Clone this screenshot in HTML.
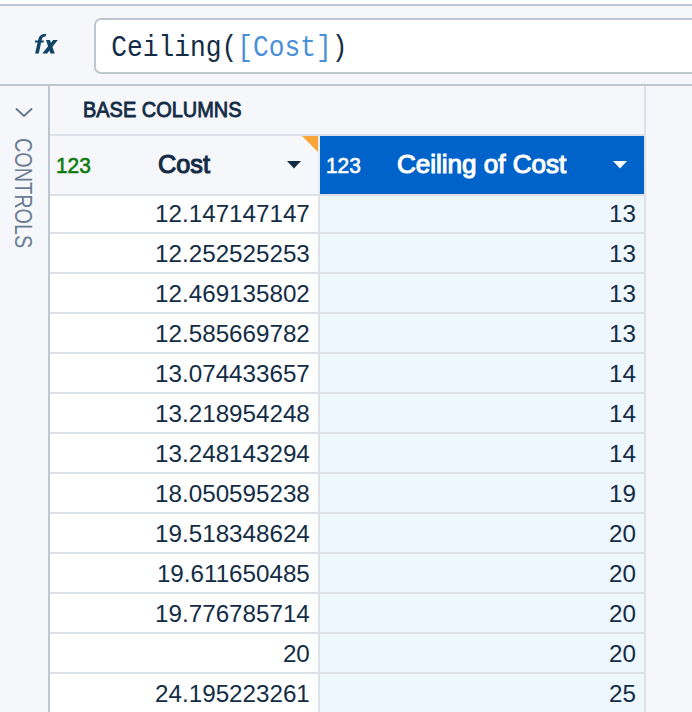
<!DOCTYPE html>
<html><head><meta charset="utf-8">
<style>
*{margin:0;padding:0;box-sizing:border-box}
html,body{width:692px;height:712px;overflow:hidden;background:#f5f7fa;font-family:"Liberation Sans",sans-serif;color:#132c45}
.a{position:absolute}
#topw{left:0;top:0;width:692px;height:4px;background:#fff}
#topl{left:0;top:4px;width:692px;height:2px;background:#bec6d0}
#input{left:94px;top:18px;width:620px;height:56px;background:#fff;border:2px solid #bec6d0;border-radius:7px}
#formula{left:111.3px;top:29.9px;font-family:"Liberation Mono",monospace;font-size:26.25px;line-height:34px;white-space:pre;color:#132c45;transform-origin:0 0;transform:scaleY(1.09)}
#formula span{color:#4a90d9}
#sep{left:0;top:84px;width:692px;height:2px;background:#bec6d0}
#vl{left:48px;top:86px;width:2px;height:626px;background:#bec6d0}
#rl{left:644px;top:86px;width:2px;height:626px;background:#dde2e8}
#bc{left:83px;top:94px;font-size:22.8px;font-weight:normal;-webkit-text-stroke:0.9px currentColor;line-height:30px;white-space:nowrap;transform-origin:0 0;transform:scaleX(0.875)}
#hl{left:50px;top:134px;width:594px;height:2px;background:#dde2e8}
#ceilh{left:320px;top:136px;width:324px;height:58px;background:#0063c9}
#hl2{left:50px;top:194px;width:594px;height:2px;background:#dde2e8}
.g123{-webkit-text-stroke:0.6px currentColor;transform-origin:0 0;transform:scaleX(0.95);font-size:22px;font-weight:normal;line-height:30px;white-space:nowrap;top:151px}
.hd{font-size:25.6px;font-weight:normal;-webkit-text-stroke:1.1px currentColor;line-height:30px;white-space:nowrap;transform-origin:0 0;transform:scaleX(0.986);top:149.2px}
#orange{left:302px;top:136px;width:0;height:0;border-top:16px solid #f9a43a;border-left:16px solid transparent}
#col1{left:50px;top:196px;width:268px;height:516px;background:#fff}
#col2{left:320px;top:196px;width:324px;height:516px;background:#eef6fe}
#vmid{left:318px;top:196px;width:2px;height:516px;background:#dde2e8}
#vmidh{left:318px;top:136px;width:2px;height:58px;background:#e6ebf2}
.rowl{position:absolute;left:50px;width:594px;height:2px;background:#dde2e8}
.num{position:absolute;font-size:24.2px;line-height:30px;white-space:nowrap;text-align:right}
#ctl{left:34.6px;top:137.5px;transform-origin:0 0;transform:rotate(90deg) scaleX(0.81);font-size:24.5px;line-height:24.5px;color:#6a7d92;white-space:nowrap}
</style></head>
<body>
<div class="a" id="topw"></div>
<div class="a" id="topl"></div>
<svg class="a" style="left:30px;top:30px" width="32" height="28" viewBox="0 0 32 28"><g fill="#0f4466"><path d="M5.1 23.6 H8.8 L11.6 10.2 C12.2 7.6 13.3 6.5 15.6 6.6 L16.3 4.2 C11.6 3.6 9.2 5.8 8.3 9.6 Z"/><path d="M5.2 10.5 H13.9 L13.6 12.6 H4.9 Z"/><path d="M16 10 H19.9 L24.8 23.6 H20.4 Z"/><path d="M23.1 10 H27.8 L17.1 23.6 H12.3 Z"/></g></svg>
<div class="a" id="input"></div>
<div class="a" id="formula">Ceiling(<span>[Cost]</span>)</div>
<div class="a" id="sep"></div>
<div class="a" id="vl"></div>
<svg class="a" style="left:15px;top:106.5px" width="18" height="12" viewBox="0 0 18 12"><path d="M1.5 2 L9 9 L16.5 2" fill="none" stroke="#63778d" stroke-width="1.8" stroke-linecap="round" stroke-linejoin="round"/></svg>
<div class="a" id="ctl">CONTROLS</div>
<div class="a" id="bc">BASE COLUMNS</div>
<div class="a" id="hl"></div>
<div class="a" id="vmidh"></div>
<div class="a" id="ceilh"></div>
<div class="a" id="hl2"></div>
<div class="a" id="orange"></div>
<div class="a g123" style="left:56px;color:#0f7b0f">123</div>
<div class="a hd" style="left:157.5px">Cost</div>
<svg class="a" style="left:287px;top:161px" width="14" height="8" viewBox="0 0 14 8"><path d="M0 0 H14 L7 7.5 Z" fill="#132c45"/></svg>
<div class="a g123" style="left:326px;color:#fff">123</div>
<div class="a hd" style="left:396.5px;color:#fff;transform:scaleX(1.017)">Ceiling of Cost</div>
<svg class="a" style="left:613px;top:161px" width="14" height="8" viewBox="0 0 14 8"><path d="M0 0 H14 L7 7.5 Z" fill="#fff"/></svg>
<div class="a" id="col1"></div>
<div class="a" id="col2"></div>
<div class="a" id="vmid"></div>
<div class="a" id="rl"></div>
<div class="rowl" style="top:232px"></div>
<div class="num" style="right:382.2px;top:199px">12.147147147</div>
<div class="num" style="right:56px;top:199px">13</div>
<div class="rowl" style="top:272px"></div>
<div class="num" style="right:382.2px;top:239px">12.252525253</div>
<div class="num" style="right:56px;top:239px">13</div>
<div class="rowl" style="top:312px"></div>
<div class="num" style="right:382.2px;top:279px">12.469135802</div>
<div class="num" style="right:56px;top:279px">13</div>
<div class="rowl" style="top:352px"></div>
<div class="num" style="right:382.2px;top:319px">12.585669782</div>
<div class="num" style="right:56px;top:319px">13</div>
<div class="rowl" style="top:392px"></div>
<div class="num" style="right:382.2px;top:359px">13.074433657</div>
<div class="num" style="right:56px;top:359px">14</div>
<div class="rowl" style="top:432px"></div>
<div class="num" style="right:382.2px;top:399px">13.218954248</div>
<div class="num" style="right:56px;top:399px">14</div>
<div class="rowl" style="top:472px"></div>
<div class="num" style="right:382.2px;top:439px">13.248143294</div>
<div class="num" style="right:56px;top:439px">14</div>
<div class="rowl" style="top:512px"></div>
<div class="num" style="right:382.2px;top:479px">18.050595238</div>
<div class="num" style="right:56px;top:479px">19</div>
<div class="rowl" style="top:552px"></div>
<div class="num" style="right:382.2px;top:519px">19.518348624</div>
<div class="num" style="right:56px;top:519px">20</div>
<div class="rowl" style="top:592px"></div>
<div class="num" style="right:382.2px;top:559px">19.611650485</div>
<div class="num" style="right:56px;top:559px">20</div>
<div class="rowl" style="top:632px"></div>
<div class="num" style="right:382.2px;top:599px">19.776785714</div>
<div class="num" style="right:56px;top:599px">20</div>
<div class="rowl" style="top:672px"></div>
<div class="num" style="right:382.2px;top:639px">20</div>
<div class="num" style="right:56px;top:639px">20</div>
<div class="rowl" style="top:712px"></div>
<div class="num" style="right:382.2px;top:679px">24.195223261</div>
<div class="num" style="right:56px;top:679px">25</div>

</body></html>
